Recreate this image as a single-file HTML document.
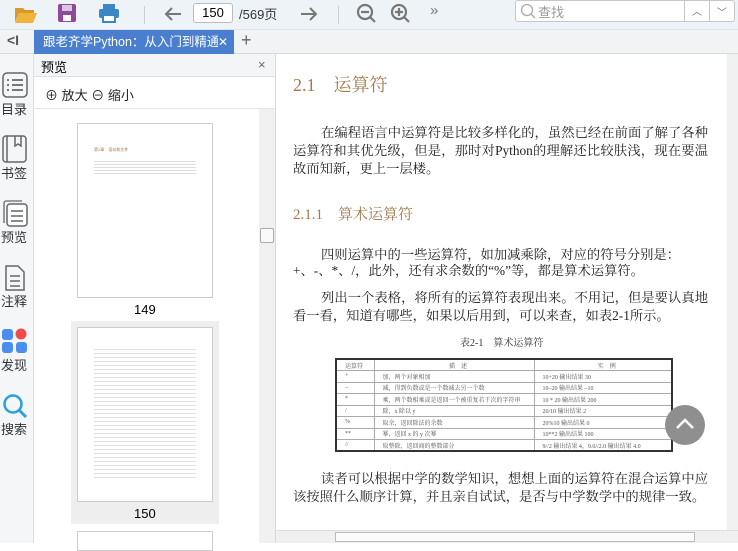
<!DOCTYPE html>
<html><head><meta charset="utf-8"><style>
*{margin:0;padding:0;box-sizing:border-box}
body{width:738px;height:543px;overflow:hidden;position:relative;font-family:"Liberation Sans","Noto Sans CJK SC",sans-serif;background:#fff}
.a{position:absolute}
.tb{left:0;top:0;width:738px;height:30px;background:#eef3f8;border-bottom:1px solid #dde3ea}
.tabs{left:0;top:30px;width:738px;height:24px;background:#f2f3f5;border-bottom:1px solid #d6d9dd}
.tab{left:34px;top:30px;width:200px;height:24px;background:#4a7fcf;color:#fff;font-size:12.5px;line-height:24px;padding-left:9px;white-space:nowrap;overflow:hidden}
.rail{left:0;top:54px;width:34px;height:489px;background:#f4f6f8;border-right:1px solid #dde0e4}
.ri{left:0;width:34px;text-align:center;font-size:13px;color:#333}
.pv{left:34px;top:54px;width:242px;height:489px;background:#fff;border-right:1px solid #d6d9dd}
.ser{font-family:"Liberation Serif","Noto Serif CJK SC",serif}
.p{left:293px;width:415px;font-size:13.3px;line-height:18px;color:#222;text-indent:28px;text-align:justify}
.h{color:#a27a4c}
.pg{background:#fff;border:1px solid #ccc}
table{border-collapse:collapse;font-size:6px;color:#555}
td{border:1px solid #aaa;height:11.5px;padding-left:8px}
</style></head><body>
<div class="a tb"></div>
<svg class="a" style="left:14px;top:4px" width="24" height="20"><path d="M1 4h8l2 2h9v3H5L1 18z" fill="#d79a2a"/><path d="M5 9h18l-4 10H1z" fill="#f0b43c"/></svg>
<svg class="a" style="left:57px;top:3px" width="20" height="20"><rect x="1" y="1" width="18" height="18" rx="2" fill="#8d4a9c"/><rect x="5" y="2" width="10" height="6" fill="#d9c6df"/><rect x="6" y="12" width="8" height="6" fill="#fff"/></svg>
<svg class="a" style="left:98px;top:3px" width="22" height="20"><rect x="5" y="1" width="12" height="5" fill="#3b86c6"/><rect x="1" y="6" width="20" height="9" rx="2" fill="#3b86c6"/><rect x="5" y="12" width="12" height="7" fill="#fff" stroke="#3b86c6" stroke-width="2"/></svg>
<div class="a" style="left:144px;top:6px;width:1px;height:18px;background:#ccd"></div>
<svg class="a" style="left:163px;top:5px" width="20" height="18"><path d="M18 9H3M9 3L3 9l6 6" stroke="#777" stroke-width="2" fill="none"/></svg>
<div class="a" style="left:193px;top:3px;width:40px;height:20px;border:1px solid #bbb;border-radius:3px;background:#fff;font-size:13px;text-align:center;line-height:18px">150</div>
<div class="a" style="left:239px;top:4px;font-size:13px;color:#333">/569页</div>
<svg class="a" style="left:299px;top:5px" width="20" height="18"><path d="M2 9h15M11 3l6 6-6 6" stroke="#777" stroke-width="2" fill="none"/></svg>
<div class="a" style="left:338px;top:6px;width:1px;height:18px;background:#ccd"></div>
<svg class="a" style="left:356px;top:3px" width="22" height="22"><circle cx="9" cy="9" r="7" stroke="#777" stroke-width="2.2" fill="none"/><path d="M5 9h8M14 14l5 5" stroke="#777" stroke-width="2.2"/></svg>
<svg class="a" style="left:390px;top:3px" width="22" height="22"><circle cx="9" cy="9" r="7" stroke="#777" stroke-width="2.2" fill="none"/><path d="M5 9h8M9 5v8M14 14l5 5" stroke="#777" stroke-width="2.2"/></svg>
<div class="a" style="left:430px;top:2px;font-size:15px;color:#777">»</div>
<div class="a" style="left:515px;top:0;width:220px;height:22px;border:1px solid #c4c8cc;border-radius:3px;background:#fff"></div>
<svg class="a" style="left:520px;top:3px" width="16" height="16"><circle cx="7" cy="7" r="5.5" stroke="#aaa" fill="none" stroke-width="1.3"/><path d="M11 11l4 4" stroke="#aaa" stroke-width="1.3"/></svg>
<div class="a" style="left:538px;top:2px;font-size:13px;color:#999">查找</div>
<div class="a" style="left:684px;top:0;width:1px;height:22px;background:#c4c8cc"></div>
<div class="a" style="left:709px;top:0;width:1px;height:22px;background:#c4c8cc"></div>
<div class="a" style="left:692px;top:3px;font-size:10px;color:#666">︿</div>
<div class="a" style="left:717px;top:4px;font-size:10px;color:#666">﹀</div>
<div class="a tabs"></div>
<div class="a" style="left:7px;top:32px;font-size:14px;color:#555;font-weight:bold">&lt;I</div>
<div class="a tab">跟老齐学Python：从入门到精通</div>
<div class="a" style="left:218px;top:30px;width:16px;height:24px;background:#4a7fcf;color:#fff;font-size:12px;line-height:24px">✕</div>
<div class="a" style="left:241px;top:30px;font-size:18px;color:#666">+</div>
<div class="a rail"></div>
<svg class="a" style="left:2px;top:72px" width="26" height="26"><rect x="1" y="1" width="24" height="24" rx="4" stroke="#666" fill="none" stroke-width="1.5"/><path d="M5 8h2M10 8h11M5 13h2M10 13h11M5 18h2M10 18h11" stroke="#666" stroke-width="1.8"/></svg>
<div class="a ri" style="top:99px;left:-3px">目录</div>
<svg class="a" style="left:2px;top:135px" width="26" height="28"><rect x="1" y="1" width="23" height="26" rx="3" stroke="#666" fill="none" stroke-width="1.5"/><path d="M5 1v26M13 1v10l3-2 3 2V1" stroke="#666" fill="none" stroke-width="1.5"/></svg>
<div class="a ri" style="top:163px;left:-3px">书签</div>
<svg class="a" style="left:2px;top:199px" width="26" height="28"><rect x="5" y="5" width="20" height="22" rx="3" stroke="#666" fill="#fff" stroke-width="1.5"/><path d="M2 24V4a2 2 0 012-2h16" stroke="#666" fill="none" stroke-width="1.3"/><path d="M9 12h12M9 17h12M9 22h12" stroke="#666" stroke-width="1.5"/></svg>
<div class="a ri" style="top:227px;left:-3px">预览</div>
<svg class="a" style="left:4px;top:264px" width="22" height="28"><path d="M2 2h12l6 6v18H2z" stroke="#666" fill="none" stroke-width="1.5"/><path d="M6 12h10M6 17h10M6 22h10" stroke="#666" stroke-width="1.5"/></svg>
<div class="a ri" style="top:291px;left:-3px">注释</div>
<svg class="a" style="left:2px;top:328px" width="26" height="26"><rect x="0" y="1" width="11" height="11" rx="3" fill="#4a8ef0"/><circle cx="19" cy="6" r="5.5" fill="#f04a4a"/><rect x="0" y="14" width="11" height="11" rx="3" fill="#4a8ef0"/><rect x="14" y="14" width="11" height="11" rx="3" fill="#4a8ef0"/></svg>
<div class="a ri" style="top:355px;left:-3px">发现</div>
<svg class="a" style="left:2px;top:393px" width="26" height="26"><circle cx="11" cy="11" r="8.5" stroke="#2aa0e0" stroke-width="2.5" fill="none"/><path d="M17 17l7 7" stroke="#2aa0e0" stroke-width="3"/></svg>
<div class="a ri" style="top:419px;left:-3px">搜索</div>
<div class="a pv"></div>
<div class="a" style="left:34px;top:54px;width:241px;height:23px;background:#f4f5f7;border-bottom:1px solid #dde0e4"></div>
<div class="a" style="left:41px;top:57px;font-size:13px">预览</div>
<div class="a" style="left:258px;top:57px;font-size:13px;color:#666">×</div>
<div class="a" style="left:45px;top:85px;font-size:13px;color:#222">⊕ 放大 ⊖ 缩小</div>
<div class="a" style="left:34px;top:108px;width:241px;height:1px;background:#e6e6e6"></div>
<div class="a" style="left:259px;top:109px;width:16px;height:434px;background:#f0f0f0"></div>
<div class="a" style="left:260px;top:228px;width:14px;height:15px;background:#fafafa;border:1px solid #aaa;border-radius:2px"></div>
<div class="a pg" style="left:77px;top:123px;width:136px;height:175px"><div style="margin:23px 0 0 16px;font-size:4px;color:#a27a4c">第2章　语句和文件</div><div style="margin:8px 16px;height:14px;background:repeating-linear-gradient(#ddd 0 1px,#fff 1px 3px)"></div></div>
<div class="a" style="left:134px;top:302px;font-size:13px">149</div>
<div class="a" style="left:71px;top:321px;width:148px;height:203px;background:#eee"></div>
<div class="a pg" style="left:77px;top:327px;width:136px;height:175px"><div style="margin:21px 16px;height:130px;background:repeating-linear-gradient(#e2e2e2 0 1px,#fff 1px 4px)"></div></div>
<div class="a" style="left:134px;top:506px;font-size:13px">150</div>
<div class="a pg" style="left:77px;top:531px;width:136px;height:20px"></div>
<div class="a" style="left:276px;top:54px;width:462px;height:489px;background:#fff"></div>
<div class="a" style="left:727px;top:54px;width:11px;height:476px;background:#f0f0f0"></div>
<div class="a" style="left:276px;top:530px;width:462px;height:13px;background:#f0f0f0;border-top:1px solid #ddd"></div>
<div class="a" style="left:335px;top:532px;width:360px;height:10px;background:#fbfbfb;border:1px solid #bbb"></div>
<div class="a ser h" style="left:293px;top:71px;font-size:18px">2.1　运算符</div>
<div class="a ser p" style="top:124px">在编程语言中运算符是比较多样化的，虽然已经在前面了解了各种运算符和其优先级，但是，那时对Python的理解还比较肤浅，现在要温故而知新，更上一层楼。</div>
<div class="a ser h" style="left:293px;top:203px;font-size:15px">2.1.1　算术运算符</div>
<div class="a ser p" style="top:246px">四则运算中的一些运算符，如加减乘除，对应的符号分别是：</div>
<div class="a ser p" style="top:262px;text-indent:0">+、-、*、/，此外，还有求余数的“%”等，都是算术运算符。</div>
<div class="a ser p" style="top:289px">列出一个表格，将所有的运算符表现出来。不用记，但是要认真地看一看，知道有哪些，如果以后用到，可以来查，如表2-1所示。</div>
<div class="a ser" style="left:460px;top:334px;font-size:10px;color:#333">表2-1　算术运算符</div>
<table class="a ser" style="left:335px;top:358px;width:338px;border:2px solid #333">
<tr><td style="width:38px">运算符</td><td style="width:160px;text-align:center">描　述</td><td style="text-align:center">实　例</td></tr>
<tr><td>+</td><td>加，两个对象相加</td><td>10+20 输出结果 30</td></tr>
<tr><td>–</td><td>减，得到负数或是一个数减去另一个数</td><td>10–20 输出结果 –10</td></tr>
<tr><td>*</td><td>乘，两个数相乘或是返回一个被重复若干次的字符串</td><td>10 * 20 输出结果 200</td></tr>
<tr><td>/</td><td>除，x 除以 y</td><td>20/10 输出结果 2</td></tr>
<tr><td>%</td><td>取余，返回除法的余数</td><td>20%10 输出结果 0</td></tr>
<tr><td>**</td><td>幂，返回 x 的 y 次幂</td><td>10**2 输出结果 100</td></tr>
<tr><td>//</td><td>取整除，返回商的整数部分</td><td>9//2 输出结果 4，9.0//2.0 输出结果 4.0</td></tr>
</table>
<div class="a ser p" style="top:470px">读者可以根据中学的数学知识，想想上面的运算符在混合运算中应该按照什么顺序计算，并且亲自试试，是否与中学数学中的规律一致。</div>
<div class="a" style="left:665px;top:405px;width:40px;height:40px;border-radius:50%;background:#8f8f8f"></div>
<svg class="a" style="left:673px;top:413px" width="24" height="24"><path d="M4 15l8-8 8 8" stroke="#fff" stroke-width="2.5" fill="none"/></svg>
</body></html>
